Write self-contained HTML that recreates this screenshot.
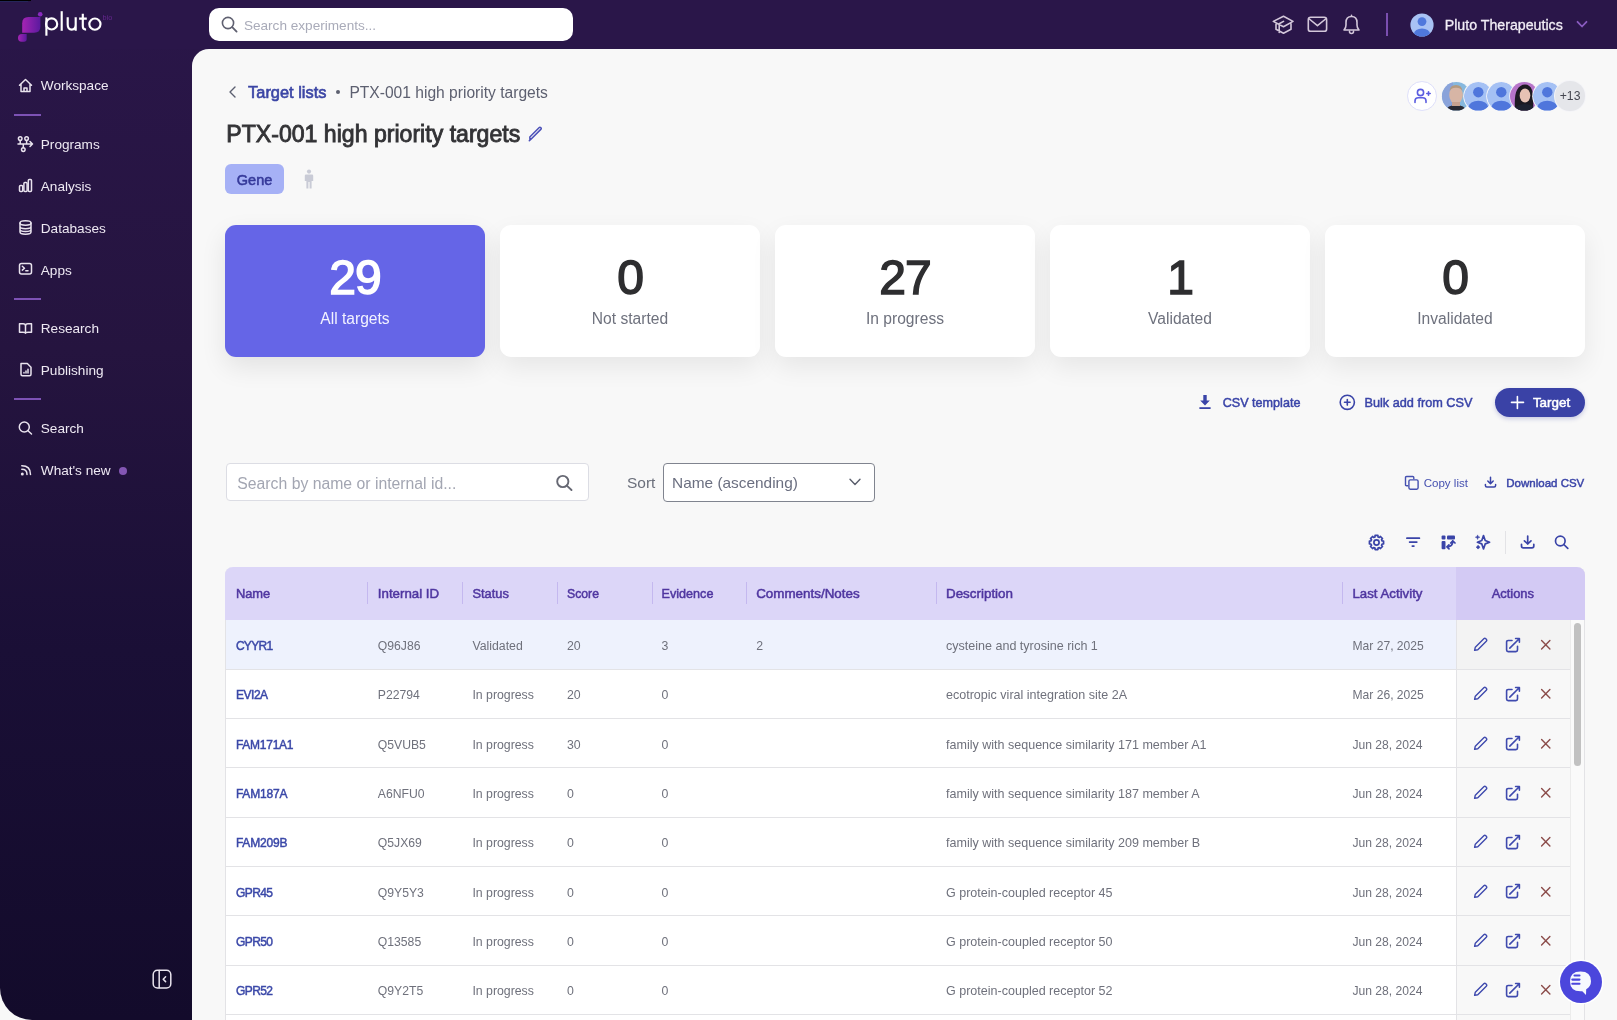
<!DOCTYPE html>
<html><head><meta charset="utf-8"><title>Pluto</title>
<style>
*{box-sizing:border-box;margin:0;padding:0}
html,body{width:1617px;height:1020px;overflow:hidden;background:#f8f8f8;font-family:"Liberation Sans",sans-serif}
.abs{position:absolute}
#app{position:absolute;left:0;top:0;width:1617px;height:1020px;overflow:hidden;will-change:transform;border-bottom-left-radius:32px;background:linear-gradient(180deg,#2a1649 0px,#25143f 350px,#1a0f36 650px,#130b2b 1020px)}
.t{position:absolute;white-space:nowrap;line-height:1}
</style></head>
<body>
<div id="app">
<div class="abs" style="left:0px;top:0px;width:1617px;height:49px;background:#2a1649"></div>
<div class="abs" style="left:0px;top:0px;width:31px;height:1px;background:#000"></div>
<div class="abs" style="left:0px;top:1px;width:28px;height:1px;background:#25265a"></div>
<div class="abs" style="left:192px;top:49px;width:1425px;height:971px;background:#f8f8f8;border-top-left-radius:17px"></div>
<svg class="abs" style="left:18px;top:9px;" width="26" height="34" viewBox="0 0 26 34"><defs><linearGradient id="lg" x1="0" x2="1" y1="0" y2="0"><stop offset="0" stop-color="#a524b4"/><stop offset="1" stop-color="#5a1a9e"/></linearGradient></defs><path d="M10.5 8 H22.4 V17.6 Q22.4 23.8 16.2 23.8 H4.2 V14.2 Q4.2 8 10.5 8Z" fill="url(#lg)"/><path d="M4 25 H8.7 V30 Q8.7 32.7 6 32.7 H3.6 Q0 32.7 0 29 Q0 25 4 25Z" fill="url(#lg)"/><circle cx="22.2" cy="5.3" r="2.3" fill="#8a2ac0"/></svg>
<svg class="abs" style="left:44px;top:10px;" width="60" height="28" viewBox="0 0 60 28"><g fill="none" stroke="#fff" stroke-width="2.15"><path d="M2.4 7.4 V25.7"/><circle cx="7.6" cy="13.9" r="5.6"/><path d="M17.7 1.2 V20.8"/><path d="M23.7 7.2 V14.6 Q23.7 19.6 27.7 19.6 Q31.7 19.6 31.7 14.6 V7.2 M31.7 12 V20.8"/><path d="M38.8 3.7 V16.3 Q38.8 19.6 42.1 19.6 M35.1 8.6 H42.8"/><circle cx="50.9" cy="14.1" r="5.6"/></g></svg>
<div class="t" style="left:102.50px;top:14px;font-size:7.3px;color:#65278f;font-weight:400;">bio</div>
<div class="abs" style="left:209px;top:8px;width:364px;height:33px;background:#fff;border-radius:10px"></div>
<svg class="abs" style="left:221px;top:16px;" width="17" height="17" viewBox="0 0 17 17"><circle cx="7" cy="7" r="5.6" fill="none" stroke="#5f6070" stroke-width="1.6"/><path d="M11.2 11.2 L15.6 15.6" stroke="#5f6070" stroke-width="1.8" stroke-linecap="round"/></svg>
<div class="t" style="left:243.90px;top:19px;font-size:13.6px;color:#a9abb9;font-weight:400;">Search experiments...</div>
<div class="t" style="left:40.80px;top:79px;font-size:13.6px;color:#eee9f3;font-weight:400;">Workspace</div>
<svg class="abs" style="left:18px;top:78px;" width="15" height="15" viewBox="0 0 15 15"><path fill="none" stroke="#e9e3ee" stroke-width="1.5" stroke-linecap="round" stroke-linejoin="round" d="M1.5 7.2 L7.5 1.5 L13.5 7.2 M3 6 V13.5 H12 V6 M6 13.5 V10 H9 V13.5"/></svg>
<div class="abs" style="left:14px;top:113.5px;width:27px;height:2px;background:#7d52b5"></div>
<div class="t" style="left:40.80px;top:138px;font-size:13.6px;color:#eee9f3;font-weight:400;">Programs</div>
<svg class="abs" style="left:17px;top:136px;" width="17" height="17" viewBox="0 0 17 17"><g fill="none" stroke="#e9e3ee" stroke-width="1.5" stroke-linecap="round" stroke-linejoin="round"><circle cx="3.2" cy="2.6" r="1.8"/><circle cx="9.6" cy="2.6" r="1.8"/><path d="M3.2 4.4 V8 M9.6 4.4 V8 M1 8 H15.5 M13 5.5 L15.5 8 L13 10.5 M6.3 8 V11.8"/><circle cx="6.3" cy="13.6" r="1.8"/></g></svg>
<div class="t" style="left:40.80px;top:180px;font-size:13.6px;color:#eee9f3;font-weight:400;">Analysis</div>
<svg class="abs" style="left:18px;top:178px;" width="15" height="15" viewBox="0 0 15 15"><g fill="none" stroke="#e9e3ee" stroke-width="1.5" stroke-linecap="round" stroke-linejoin="round"><rect x="1.5" y="7.5" width="3.2" height="6" rx="1"/><rect x="5.9" y="4.5" width="3.2" height="9" rx="1"/><rect x="10.3" y="1.5" width="3.2" height="12" rx="1"/></g></svg>
<div class="t" style="left:40.80px;top:222px;font-size:13.6px;color:#eee9f3;font-weight:400;">Databases</div>
<svg class="abs" style="left:18px;top:220px;" width="15" height="15" viewBox="0 0 15 15"><g fill="none" stroke="#e9e3ee" stroke-width="1.5" stroke-linecap="round" stroke-linejoin="round"><ellipse cx="7.5" cy="3" rx="5.5" ry="2.2"/><path d="M2 3 V12 Q2 14.2 7.5 14.2 Q13 14.2 13 12 V3 M2 6.5 Q2 8.7 7.5 8.7 Q13 8.7 13 6.5 M2 9.5 Q2 11.5 7.5 11.5 Q13 11.5 13 9.5"/></g></svg>
<div class="t" style="left:40.80px;top:264px;font-size:13.6px;color:#eee9f3;font-weight:400;">Apps</div>
<svg class="abs" style="left:18px;top:262px;" width="15" height="14" viewBox="0 0 15 14"><g fill="none" stroke="#e9e3ee" stroke-width="1.5" stroke-linecap="round" stroke-linejoin="round"><rect x="1.5" y="1.5" width="12" height="10.5" rx="2"/><path d="M4.3 4.3 L6.5 6.2 L4.3 8.1 M7.8 8.8 H10"/></g></svg>
<div class="abs" style="left:14px;top:297.5px;width:27px;height:2px;background:#7d52b5"></div>
<div class="t" style="left:40.80px;top:322px;font-size:13.6px;color:#eee9f3;font-weight:400;">Research</div>
<svg class="abs" style="left:18px;top:322px;" width="15" height="13" viewBox="0 0 15 13"><g fill="none" stroke="#e9e3ee" stroke-width="1.5" stroke-linecap="round" stroke-linejoin="round"><path d="M1.5 1.8 H5 Q7.5 1.8 7.5 4 V11.3 Q7.5 10.3 5 10.3 H1.5 Z M13.5 1.8 H10 Q7.5 1.8 7.5 4 V11.3 Q7.5 10.3 10 10.3 H13.5 Z"/></g></svg>
<div class="t" style="left:40.80px;top:364px;font-size:13.6px;color:#eee9f3;font-weight:400;">Publishing</div>
<svg class="abs" style="left:19px;top:362px;" width="14" height="15" viewBox="0 0 14 15"><g fill="none" stroke="#e9e3ee" stroke-width="1.5" stroke-linecap="round" stroke-linejoin="round"><path d="M2 1.5 H8.3 L12 5.2 V12.3 Q12 13.8 10.5 13.8 H3.5 Q2 13.8 2 12.3 Z"/><path d="M5 11 V10.5 M7 11 V9 M9 11 V7.3"/></g></svg>
<div class="abs" style="left:14px;top:397.5px;width:27px;height:2px;background:#7d52b5"></div>
<div class="t" style="left:40.80px;top:422px;font-size:13.6px;color:#eee9f3;font-weight:400;">Search</div>
<svg class="abs" style="left:18px;top:421px;" width="15" height="15" viewBox="0 0 15 15"><g fill="none" stroke="#e9e3ee" stroke-width="1.5" stroke-linecap="round" stroke-linejoin="round"><circle cx="6.3" cy="6" r="5"/><path d="M10 9.7 L13.5 13"/></g></svg>
<div class="t" style="left:40.80px;top:464px;font-size:13.6px;color:#eee9f3;font-weight:400;">What's new</div>
<svg class="abs" style="left:19px;top:463px;" width="14" height="14" viewBox="0 0 14 14"><g fill="none" stroke="#e9e3ee" stroke-width="1.5" stroke-linecap="round" stroke-linejoin="round"><path d="M2.8 2.8 Q11.5 2.8 11.5 11.5 M2.8 6.3 Q8 6.3 8 11.5"/></g><circle cx="3.3" cy="11" r="1.5" fill="#e9e3ee"/></svg>
<div class="abs" style="left:119px;top:466.9px;width:8px;height:8px;background:#8356b3;border-radius:50%"></div>
<svg class="abs" style="left:152px;top:969px;" width="21" height="21" viewBox="0 0 21 21"><g fill="none" stroke="#e9e3ee" stroke-width="1.5" stroke-linecap="round" stroke-linejoin="round"><rect x="1.2" y="1.2" width="17.6" height="17.8" rx="4.3"/><path d="M7.2 1.5 V18.6 M13.6 7.8 L11.2 10.2 L13.6 12.6"/></g></svg>
<svg class="abs" style="left:1272px;top:14px;" width="22" height="21" viewBox="0 0 22 21"><g fill="none" stroke="#d3c7da" stroke-width="1.6" stroke-linecap="round" stroke-linejoin="round"><path d="M1.3 7.4 L11.5 2.2 L21 7.4 L11.5 12.7 Z M4 9.8 V15.3 L11.5 19.2 L19 15.3 V9.8 M11.5 7.4 L7.2 9.7 V18.4"/></g></svg>
<svg class="abs" style="left:1307px;top:16px;" width="21" height="17" viewBox="0 0 21 17"><g fill="none" stroke="#d3c7da" stroke-width="1.6" stroke-linecap="round" stroke-linejoin="round"><rect x="1.3" y="1.3" width="18.3" height="14" rx="2.4"/><path d="M2.3 3 L10.45 9.6 L18.6 3"/></g></svg>
<svg class="abs" style="left:1342px;top:14px;" width="19" height="21" viewBox="0 0 19 21"><g fill="none" stroke="#d3c7da" stroke-width="1.6" stroke-linecap="round" stroke-linejoin="round"><path d="M2 16 Q4 14 4 11 V8.5 Q4 2.5 9.5 2.5 Q15 2.5 15 8.5 V11 Q15 14 17 16 Z M7.5 17.5 Q7.5 19.5 9.5 19.5 Q11.5 19.5 11.5 17.5 M9.5 1.2 V2.5"/></g></svg>
<div class="abs" style="left:1385.5px;top:13px;width:2px;height:23px;background:#7b4fb0"></div>
<svg class="abs" style="left:1410px;top:13px;" width="24" height="24" viewBox="0 0 24 24"><defs><clipPath id="av0"><circle cx="12" cy="12" r="11.6"/></clipPath></defs><circle cx="12" cy="12" r="11.6" fill="#a8c2f4"/><g clip-path="url(#av0)" fill="#4f78dc"><circle cx="12" cy="8.6" r="4.4"/><ellipse cx="12" cy="20.6" rx="8" ry="5.2"/></g></svg>
<div class="t" style="left:1444.70px;top:18px;font-size:14.2px;color:#f2edf6;font-weight:400;-webkit-text-stroke:0.3px #f2edf6;">Pluto Therapeutics</div>
<svg class="abs" style="left:1576px;top:20px;" width="12" height="9" viewBox="0 0 12 9"><path d="M1.5 1.8 L6 6.5 L10.5 1.8" fill="none" stroke="#8a5cc0" stroke-width="1.8" stroke-linecap="round" stroke-linejoin="round"/></svg>
<svg class="abs" style="left:227px;top:85px;" width="11" height="14" viewBox="0 0 11 14"><path d="M8 2 L3 7 L8 12" fill="none" stroke="#5b5f70" stroke-width="1.4" stroke-linecap="round" stroke-linejoin="round"/></svg>
<div class="t" style="left:248.10px;top:84px;font-size:16.4px;color:#3b45a5;font-weight:400;-webkit-text-stroke:0.62px #3b45a5;">Target lists</div>
<div class="abs" style="left:336.2px;top:90.3px;width:4px;height:4px;background:#5d6070;border-radius:50%"></div>
<div class="t" style="left:349.40px;top:85px;font-size:15.6px;color:#5d6070;font-weight:400;">PTX-001 high priority targets</div>
<div class="t" style="left:226.30px;top:123px;font-size:23.1px;color:#333336;font-weight:400;-webkit-text-stroke:0.88px #333336;">PTX-001 high priority targets</div>
<svg class="abs" style="left:527px;top:126px;" width="17" height="17" viewBox="0 0 17 17"><path d="M3 13.8 L2.3 14.7 L3.2 14 L13.8 3.4 Q14.8 2.4 13.8 1.6 Q12.9 0.8 12 1.7 L2.8 11 Z" fill="none" stroke="#4b50b8" stroke-width="1.5" stroke-linejoin="round"/></svg>
<div class="abs" style="left:225.3px;top:164.4px;width:59px;height:30px;background:#a6b1f6;border-radius:6px"></div>
<div class="t" style="left:236.80px;top:173px;font-size:14.5px;color:#363a9a;font-weight:400;-webkit-text-stroke:0.55px #363a9a;">Gene</div>
<svg class="abs" style="left:303px;top:169px;" width="12" height="21" viewBox="0 0 12 21"><g fill="#c9cbd6"><circle cx="6" cy="2.6" r="2.1"/><path d="M3 5.6 H9 Q10.2 5.6 10.2 6.8 V12 H8.6 V19.5 H6.6 V13 H5.4 V19.5 H3.4 V12 H1.8 V6.8 Q1.8 5.6 3 5.6Z"/></g></svg>
<div class="abs" style="left:1407.3px;top:81.1px;width:29.8px;height:29.8px;background:#fff;border:1px solid #dedffa;border-radius:50%"></div>
<svg class="abs" style="left:1413px;top:87px;" width="18" height="18" viewBox="0 0 18 18"><g fill="none" stroke="#5b5de0" stroke-width="1.6" stroke-linecap="round"><circle cx="7.5" cy="5.5" r="3.1"/><path d="M2 15.5 V14 Q2 10.8 5.3 10.8 H9.7 Q13 10.8 13 14 V15.5 M13.8 6.5 H17.2 M15.5 4.8 V8.2"/></g></svg>
<svg class="abs" style="left:1440.7px;top:80.7px" width="30.6" height="30.6" viewBox="0 0 30.6 30.6"><defs><clipPath id="c1456"><circle cx="15.3" cy="15.3" r="14.3"/></clipPath></defs><circle cx="15.3" cy="15.3" r="15.100000000000001" fill="#f4f4f8"/><g clip-path="url(#c1456)"><rect width="30.6" height="30.6" fill="#86b8de"/><rect x="0" y="0" width="12" height="30.6" fill="#8aa3da"/><ellipse cx="15" cy="14" rx="6.8" ry="9" fill="#d7b5a5"/><path d="M8.5 10 Q9 4 15 4 Q21 4 21.5 10 Q19 6.5 15 6.8 Q11 6.5 8.5 10Z" fill="#b39a80"/><path d="M4 30.6 Q6 24 15 24 Q24 24 26 30.6Z" fill="#2a2a33"/><rect x="11" y="21" width="8" height="4" fill="#c8a290"/></g></svg>
<svg class="abs" style="left:1463.3px;top:80.7px" width="30.6" height="30.6" viewBox="0 0 30.6 30.6"><defs><clipPath id="c1478"><circle cx="15.3" cy="15.3" r="14.3"/></clipPath></defs><circle cx="15.3" cy="15.3" r="15.100000000000001" fill="#f4f4f8"/><g clip-path="url(#c1478)"><circle cx="15.3" cy="15.3" r="14.3" fill="#a5c1f4"/><circle cx="15.3" cy="11.2" r="5.2" fill="#4f76dc"/><ellipse cx="15.3" cy="25.6" rx="9.6" ry="5.8" fill="#4f76dc"/></g></svg>
<svg class="abs" style="left:1485.9px;top:80.7px" width="30.6" height="30.6" viewBox="0 0 30.6 30.6"><defs><clipPath id="c1501"><circle cx="15.3" cy="15.3" r="14.3"/></clipPath></defs><circle cx="15.3" cy="15.3" r="15.100000000000001" fill="#f4f4f8"/><g clip-path="url(#c1501)"><circle cx="15.3" cy="15.3" r="14.3" fill="#a5c1f4"/><circle cx="15.3" cy="11.2" r="5.2" fill="#4f76dc"/><ellipse cx="15.3" cy="25.6" rx="9.6" ry="5.8" fill="#4f76dc"/></g></svg>
<svg class="abs" style="left:1508.7px;top:80.7px" width="30.6" height="30.6" viewBox="0 0 30.6 30.6"><defs><clipPath id="c1524"><circle cx="15.3" cy="15.3" r="14.3"/></clipPath></defs><circle cx="15.3" cy="15.3" r="15.100000000000001" fill="#f4f4f8"/><g clip-path="url(#c1524)"><rect width="30.6" height="30.6" fill="#b774c9"/><path d="M6 30 Q5 14 8 9 Q11 3.5 16 3.5 Q21 3.5 23 9 Q25 15 24 30Z" fill="#1d1a22"/><ellipse cx="16" cy="14.5" rx="5.3" ry="7" fill="#e7c2b4"/><path d="M4 30.6 Q7 23 16 23 Q25 23 27 30.6Z" fill="#1e2230"/></g></svg>
<svg class="abs" style="left:1531.5px;top:80.7px" width="30.6" height="30.6" viewBox="0 0 30.6 30.6"><defs><clipPath id="c1546"><circle cx="15.3" cy="15.3" r="14.3"/></clipPath></defs><circle cx="15.3" cy="15.3" r="15.100000000000001" fill="#f4f4f8"/><g clip-path="url(#c1546)"><circle cx="15.3" cy="15.3" r="14.3" fill="#a5c1f4"/><circle cx="15.3" cy="11.2" r="5.2" fill="#4f76dc"/><ellipse cx="15.3" cy="25.6" rx="9.6" ry="5.8" fill="#4f76dc"/></g></svg>
<div class="abs" style="left:1555.3px;top:81.2px;width:29.6px;height:29.6px;background:#e5e6ea;border-radius:50%;box-shadow:0 0 0 1px #f4f4f8"></div>
<div class="t" style="left:1370.10px;width:400px;text-align:center;top:90px;font-size:12.2px;color:#444650;font-weight:400;">+13</div>
<div class="abs" style="left:225px;top:225px;width:260px;height:132px;background:#6565e7;border-radius:11px;box-shadow:0 10px 26px rgba(0,0,0,0.09)"></div>
<div class="t" style="left:155.00px;width:400px;text-align:center;top:254px;font-size:48px;color:#ffffff;font-weight:400;-webkit-text-stroke:1.50px #ffffff;letter-spacing:-1.0px">29</div>
<div class="t" style="left:155.00px;width:400px;text-align:center;top:311px;font-size:15.6px;color:#f2f2ff;font-weight:400;">All targets</div>
<div class="abs" style="left:500px;top:225px;width:260px;height:132px;background:#fff;border-radius:11px;box-shadow:0 10px 26px rgba(0,0,0,0.075)"></div>
<div class="t" style="left:430.00px;width:400px;text-align:center;top:254px;font-size:48px;color:#2e2e30;font-weight:400;-webkit-text-stroke:1.50px #2e2e30;letter-spacing:-1.0px">0</div>
<div class="t" style="left:430.00px;width:400px;text-align:center;top:311px;font-size:15.6px;color:#6e717d;font-weight:400;">Not started</div>
<div class="abs" style="left:775px;top:225px;width:260px;height:132px;background:#fff;border-radius:11px;box-shadow:0 10px 26px rgba(0,0,0,0.075)"></div>
<div class="t" style="left:705.00px;width:400px;text-align:center;top:254px;font-size:48px;color:#2e2e30;font-weight:400;-webkit-text-stroke:1.50px #2e2e30;letter-spacing:-1.0px">27</div>
<div class="t" style="left:705.00px;width:400px;text-align:center;top:311px;font-size:15.6px;color:#6e717d;font-weight:400;">In progress</div>
<div class="abs" style="left:1050px;top:225px;width:260px;height:132px;background:#fff;border-radius:11px;box-shadow:0 10px 26px rgba(0,0,0,0.075)"></div>
<div class="t" style="left:980.00px;width:400px;text-align:center;top:254px;font-size:48px;color:#2e2e30;font-weight:400;-webkit-text-stroke:1.50px #2e2e30;letter-spacing:-1.0px">1</div>
<div class="t" style="left:980.00px;width:400px;text-align:center;top:311px;font-size:15.6px;color:#6e717d;font-weight:400;">Validated</div>
<div class="abs" style="left:1325px;top:225px;width:260px;height:132px;background:#fff;border-radius:11px;box-shadow:0 10px 26px rgba(0,0,0,0.075)"></div>
<div class="t" style="left:1255.00px;width:400px;text-align:center;top:254px;font-size:48px;color:#2e2e30;font-weight:400;-webkit-text-stroke:1.50px #2e2e30;letter-spacing:-1.0px">0</div>
<div class="t" style="left:1255.00px;width:400px;text-align:center;top:311px;font-size:15.6px;color:#6e717d;font-weight:400;">Invalidated</div>
<svg class="abs" style="left:1198px;top:394px;" width="14" height="16" viewBox="0 0 14 16"><path d="M5.3 1 H8.7 V6.5 H11.8 L7 11.6 L2.2 6.5 H5.3 Z" fill="#3a44a8"/><rect x="1.4" y="13.2" width="11.2" height="1.8" fill="#3a44a8"/></svg>
<div class="t" style="left:1222.70px;top:397px;font-size:12.6px;color:#3a44a8;font-weight:400;-webkit-text-stroke:0.48px #3a44a8;">CSV template</div>
<svg class="abs" style="left:1338px;top:393px;" width="18" height="18" viewBox="0 0 18 18"><g fill="none" stroke="#3a44a8" stroke-width="1.6" stroke-linecap="round"><circle cx="9.3" cy="9.3" r="7.1"/><path d="M9.3 6.5 V12.1 M6.5 9.3 H12.1"/></g></svg>
<div class="t" style="left:1364.50px;top:397px;font-size:12.7px;color:#3a44a8;font-weight:400;-webkit-text-stroke:0.48px #3a44a8;">Bulk add from CSV</div>
<div class="abs" style="left:1495.3px;top:388.2px;width:89.6px;height:28.6px;background:#3a42a6;border-radius:15px;box-shadow:0 2px 4px rgba(58,66,166,0.25)"></div>
<svg class="abs" style="left:1510px;top:395px;" width="15" height="15" viewBox="0 0 15 15"><path d="M7.4 1.5 V13.5 M1.5 7.4 H13.5" stroke="#fff" stroke-width="1.6" stroke-linecap="round"/></svg>
<div class="t" style="left:1532.90px;top:396px;font-size:13.4px;color:#fff;font-weight:400;-webkit-text-stroke:0.51px #fff;">Target</div>
<div class="abs" style="left:225.6px;top:463.2px;width:363px;height:38.3px;background:#fff;border:1px solid #dcdde4;border-radius:4px"></div>
<div class="t" style="left:237.30px;top:476px;font-size:15.78px;color:#a3a6b2;font-weight:400;">Search by name or internal id...</div>
<svg class="abs" style="left:555px;top:474px;" width="19" height="18" viewBox="0 0 19 18"><g fill="none" stroke="#666873" stroke-width="1.9" stroke-linecap="round"><circle cx="7.8" cy="7.5" r="5.6"/><path d="M11.8 11.6 L16.5 16"/></g></svg>
<div class="t" style="left:627.00px;top:475px;font-size:15.48px;color:#6b6f7b;font-weight:400;">Sort</div>
<div class="abs" style="left:663.3px;top:462.8px;width:211.7px;height:39px;background:#fff;border:1px solid #80848f;border-radius:4px"></div>
<div class="t" style="left:672.00px;top:475px;font-size:15.41px;color:#6b6f80;font-weight:400;">Name (ascending)</div>
<svg class="abs" style="left:848px;top:477px;" width="14" height="10" viewBox="0 0 14 10"><path d="M2 2.3 L7 7.6 L12 2.3" fill="none" stroke="#5a5e6c" stroke-width="1.4" stroke-linecap="round" stroke-linejoin="round"/></svg>
<svg class="abs" style="left:1404px;top:474.5px;" width="16" height="16" viewBox="0 0 16 16"><g fill="none" stroke="#4550b0" stroke-width="1.4" stroke-linejoin="round"><path d="M4.2 10.8 H2.6 Q1.5 10.8 1.5 9.7 V2.6 Q1.5 1.5 2.6 1.5 H8.7 Q9.8 1.5 9.8 2.6 V4.2"/><rect x="4.9" y="4.9" width="9.2" height="9.3" rx="1.4"/></g></svg>
<div class="t" style="left:1423.70px;top:478px;font-size:11.55px;color:#4550b0;font-weight:400;">Copy list</div>
<svg class="abs" style="left:1484.2px;top:476px;" width="13" height="13" viewBox="0 0 13 13"><g fill="none" stroke="#3a44a8" stroke-width="1.5" stroke-linecap="round" stroke-linejoin="round"><path d="M6.5 1.2 V7.6 M3.8 5 L6.5 7.7 L9.2 5 M1.4 8.4 V9.6 Q1.4 11.1 2.9 11.1 H10.1 Q11.6 11.1 11.6 9.6 V8.4"/></g></svg>
<div class="t" style="left:1506.30px;top:478px;font-size:11.5px;color:#3a44a8;font-weight:400;-webkit-text-stroke:0.44px #3a44a8;">Download CSV</div>
<svg class="abs" style="left:1368.1px;top:533.6px;" width="17" height="17" viewBox="0 0 17 17"><polygon points="7.07,1.44 9.93,1.44 10.01,2.90 11.40,3.47 12.48,2.50 14.50,4.52 13.53,5.60 14.10,6.99 15.56,7.07 15.56,9.93 14.10,10.01 13.53,11.40 14.50,12.48 12.48,14.50 11.40,13.53 10.01,14.10 9.93,15.56 7.07,15.56 6.99,14.10 5.60,13.53 4.52,14.50 2.50,12.48 3.47,11.40 2.90,10.01 1.44,9.93 1.44,7.07 2.90,6.99 3.47,5.60 2.50,4.52 4.52,2.50 5.60,3.47 6.99,2.90" fill="none" stroke="#3a44a8" stroke-width="1.7" stroke-linecap="round" stroke-linejoin="round" stroke-width="1.5"/><circle cx="8.5" cy="8.5" r="2.6" fill="none" stroke="#3a44a8" stroke-width="1.7" stroke-linecap="round" stroke-linejoin="round" stroke-width="1.5"/></svg>
<svg class="abs" style="left:1404.5px;top:536px;" width="16" height="12" viewBox="0 0 16 12"><g fill="none" stroke="#3a44a8" stroke-width="1.7" stroke-linecap="round" stroke-linejoin="round" stroke-width="1.7"><path d="M1.9 2.2 H14.4 M4.6 6.1 H11.8 M7.3 10.1 H8.9"/></g></svg>
<svg class="abs" style="left:1440.5px;top:534.5px;" width="16" height="15" viewBox="0 0 16 15"><g fill="#3a44a8"><rect x="0.6" y="0.6" width="3.9" height="3.9" rx="1"/><rect x="6" y="0.6" width="8" height="3.9" rx="1"/><rect x="0.6" y="6" width="3.9" height="8.2" rx="1"/></g><g fill="none" stroke="#3a44a8" stroke-width="1.7" stroke-linecap="round" stroke-linejoin="round" stroke-width="1.5"><path d="M5.9 11.8 Q11.8 11.8 11.8 5.9 M7.9 9.9 L5.9 11.8 L8 13.8 M9.7 8 L11.8 5.9 L14 8"/></g></svg>
<svg class="abs" style="left:1474.8px;top:533.7px;" width="17" height="17" viewBox="0 0 17 17"><path d="M8.5 1.5 L10.2 6.5 L14.6 8.2 L10.2 9.9 L8.5 14.9 L6.8 9.9 L2.4 8.2 L6.8 6.5 Z" fill="none" stroke="#3a44a8" stroke-width="1.7" stroke-linecap="round" stroke-linejoin="round" stroke-width="1.5"/><path d="M2.6 0.9 L3.2 2.6 L4.9 3.2 L3.2 3.8 L2.6 5.5 L2 3.8 L0.3 3.2 L2 2.6Z" fill="#3a44a8" stroke="#3a44a8" stroke-width="0.5" stroke-linejoin="round"/><path d="M3.1 11.3 L5 13.2 L3.1 15.1 L1.2 13.2Z" fill="#3a44a8" stroke="#3a44a8" stroke-width="0.6" stroke-linejoin="round"/></svg>
<div class="abs" style="left:1504.7px;top:531px;width:1.2px;height:22.6px;background:#e3e3e6"></div>
<svg class="abs" style="left:1519.5px;top:535px;" width="16" height="15" viewBox="0 0 16 15"><g fill="none" stroke="#3a44a8" stroke-width="1.7" stroke-linecap="round" stroke-linejoin="round"><path d="M7.7 1 V9 M4.4 5.8 L7.7 9 L11 5.8 M1.5 9.3 V11 Q1.5 12.8 3.3 12.8 H12 Q13.8 12.8 13.8 11 V9.3"/></g></svg>
<svg class="abs" style="left:1554px;top:535px;" width="16" height="15" viewBox="0 0 16 15"><g fill="none" stroke="#3a44a8" stroke-width="1.7" stroke-linecap="round" stroke-linejoin="round" stroke-width="1.8"><circle cx="6.3" cy="6" r="4.8"/><path d="M9.8 9.5 L13.8 13.3"/></g></svg>
<div class="abs" style="left:225px;top:567px;width:1360px;height:453px;background:#fff;border-left:1px solid #e3e3e6;border-right:1px solid #e3e3e6;border-top-left-radius:8px;border-top-right-radius:8px;overflow:hidden"></div>
<div class="abs" style="left:225px;top:567px;width:1231.4px;height:53px;background:#dcd6f8;border-top-left-radius:8px"></div>
<div class="abs" style="left:1456.4px;top:567px;width:128.5999999999999px;height:53px;background:#d3caf4;border-top-right-radius:8px"></div>
<div class="abs" style="left:367.3px;top:581.7px;width:1.2px;height:22.5px;background:#c4b8ef"></div>
<div class="abs" style="left:462.0px;top:581.7px;width:1.2px;height:22.5px;background:#c4b8ef"></div>
<div class="abs" style="left:556.9px;top:581.7px;width:1.2px;height:22.5px;background:#c4b8ef"></div>
<div class="abs" style="left:651.8px;top:581.7px;width:1.2px;height:22.5px;background:#c4b8ef"></div>
<div class="abs" style="left:746.1px;top:581.7px;width:1.2px;height:22.5px;background:#c4b8ef"></div>
<div class="abs" style="left:935.7px;top:581.7px;width:1.2px;height:22.5px;background:#c4b8ef"></div>
<div class="abs" style="left:1342.0px;top:581.7px;width:1.2px;height:22.5px;background:#c4b8ef"></div>
<div class="t" style="left:235.90px;top:588px;font-size:12.9px;color:#4f36a0;font-weight:400;-webkit-text-stroke:0.49px #4f36a0;">Name</div>
<div class="t" style="left:377.80px;top:587px;font-size:13.3px;color:#4f36a0;font-weight:400;-webkit-text-stroke:0.51px #4f36a0;">Internal ID</div>
<div class="t" style="left:472.40px;top:588px;font-size:12.85px;color:#4f36a0;font-weight:400;-webkit-text-stroke:0.49px #4f36a0;">Status</div>
<div class="t" style="left:567.00px;top:588px;font-size:12.25px;color:#4f36a0;font-weight:400;-webkit-text-stroke:0.47px #4f36a0;">Score</div>
<div class="t" style="left:661.60px;top:588px;font-size:12.6px;color:#4f36a0;font-weight:400;-webkit-text-stroke:0.48px #4f36a0;">Evidence</div>
<div class="t" style="left:756.20px;top:587px;font-size:13.4px;color:#4f36a0;font-weight:400;-webkit-text-stroke:0.51px #4f36a0;">Comments/Notes</div>
<div class="t" style="left:946.00px;top:587px;font-size:13.4px;color:#4f36a0;font-weight:400;-webkit-text-stroke:0.51px #4f36a0;">Description</div>
<div class="t" style="left:1352.50px;top:587px;font-size:13.25px;color:#4f36a0;font-weight:400;-webkit-text-stroke:0.50px #4f36a0;">Last Activity</div>
<div class="t" style="left:1312.80px;width:400px;text-align:center;top:588px;font-size:12.9px;color:#4f36a0;font-weight:400;-webkit-text-stroke:0.49px #4f36a0;">Actions</div>
<div class="abs" style="left:1456px;top:620px;width:114px;height:400px;background:#f8f8f8;border-left:1px solid #e3e3e6"></div>
<div class="abs" style="left:1457px;top:620px;width:113px;height:49.3px;background:#f3f3f3"></div>
<div class="abs" style="left:1570px;top:620px;width:14px;height:400px;background:#fafafa;border-left:1px solid #ececec"></div>
<div class="abs" style="left:226px;top:620.0px;width:1230px;height:49.3px;background:#eef2fd"></div>
<div class="abs" style="left:226px;top:668.6999999999999px;width:1344px;height:1px;background:#e3e3e6"></div>
<div class="t" style="left:235.90px;top:640px;font-size:12.0px;color:#3b48a8;font-weight:400;-webkit-text-stroke:0.46px #3b48a8;letter-spacing:-0.7px">CYYR1</div>
<div class="t" style="left:377.80px;top:640px;font-size:12.2px;color:#6f717c;font-weight:400;">Q96J86</div>
<div class="t" style="left:472.40px;top:640px;font-size:12.3px;color:#6f717c;font-weight:400;">Validated</div>
<div class="t" style="left:567.00px;top:640px;font-size:12.3px;color:#6f717c;font-weight:400;">20</div>
<div class="t" style="left:661.60px;top:640px;font-size:12.3px;color:#6f717c;font-weight:400;">3</div>
<div class="t" style="left:756.20px;top:640px;font-size:12.3px;color:#6f717c;font-weight:400;">2</div>
<div class="t" style="left:946.00px;top:640px;font-size:12.54px;color:#6f717c;font-weight:400;">cysteine and tyrosine rich 1</div>
<div class="t" style="left:1352.50px;top:640px;font-size:12.1px;color:#6f717c;font-weight:400;">Mar 27, 2025</div>
<svg class="abs" style="left:1473px;top:637.15px;" width="15" height="15" viewBox="0 0 15 15"><path d="M1.6 13.4 L2.3 10.2 L10.8 1.7 Q11.8 0.7 12.8 1.7 L13.3 2.2 Q14.3 3.2 13.3 4.2 L4.8 12.7 Z" fill="none" stroke="#3f4aae" stroke-width="1.4" stroke-linejoin="round"/></svg>
<svg class="abs" style="left:1504.5px;top:636.85px;" width="16" height="16" viewBox="0 0 16 16"><g fill="none" stroke="#3f4aae" stroke-width="1.6" stroke-linecap="round" stroke-linejoin="round"><path d="M7 3.45 H3.2 Q1.6 3.45 1.6 5.05 V13.05 Q1.6 14.65 3.2 14.65 H10.9 Q12.5 14.65 12.5 13.05 V9.3 M4.8 11.1 L14.2 1.7 M10.6 1.5 H14.4 V5.2"/></g></svg>
<svg class="abs" style="left:1540.2px;top:639.05px;" width="12" height="12" viewBox="0 0 12 12"><path d="M1.6 1.6 L9.9 9.9 M9.9 1.6 L1.6 9.9" stroke="#8b4c4a" stroke-width="1.4" stroke-linecap="round"/></svg>
<div class="abs" style="left:226px;top:717.9999999999999px;width:1344px;height:1px;background:#e3e3e6"></div>
<div class="t" style="left:235.90px;top:689px;font-size:12.0px;color:#3b48a8;font-weight:400;-webkit-text-stroke:0.46px #3b48a8;letter-spacing:-0.45px">EVI2A</div>
<div class="t" style="left:377.80px;top:689px;font-size:12.2px;color:#6f717c;font-weight:400;">P22794</div>
<div class="t" style="left:472.40px;top:689px;font-size:12.3px;color:#6f717c;font-weight:400;">In progress</div>
<div class="t" style="left:567.00px;top:689px;font-size:12.3px;color:#6f717c;font-weight:400;">20</div>
<div class="t" style="left:661.60px;top:689px;font-size:12.3px;color:#6f717c;font-weight:400;">0</div>
<div class="t" style="left:756.20px;top:689px;font-size:12.3px;color:#6f717c;font-weight:400;"></div>
<div class="t" style="left:946.00px;top:689px;font-size:12.54px;color:#6f717c;font-weight:400;">ecotropic viral integration site 2A</div>
<div class="t" style="left:1352.50px;top:689px;font-size:12.1px;color:#6f717c;font-weight:400;">Mar 26, 2025</div>
<svg class="abs" style="left:1473px;top:686.4499999999999px;" width="15" height="15" viewBox="0 0 15 15"><path d="M1.6 13.4 L2.3 10.2 L10.8 1.7 Q11.8 0.7 12.8 1.7 L13.3 2.2 Q14.3 3.2 13.3 4.2 L4.8 12.7 Z" fill="none" stroke="#3f4aae" stroke-width="1.4" stroke-linejoin="round"/></svg>
<svg class="abs" style="left:1504.5px;top:686.15px;" width="16" height="16" viewBox="0 0 16 16"><g fill="none" stroke="#3f4aae" stroke-width="1.6" stroke-linecap="round" stroke-linejoin="round"><path d="M7 3.45 H3.2 Q1.6 3.45 1.6 5.05 V13.05 Q1.6 14.65 3.2 14.65 H10.9 Q12.5 14.65 12.5 13.05 V9.3 M4.8 11.1 L14.2 1.7 M10.6 1.5 H14.4 V5.2"/></g></svg>
<svg class="abs" style="left:1540.2px;top:688.3499999999999px;" width="12" height="12" viewBox="0 0 12 12"><path d="M1.6 1.6 L9.9 9.9 M9.9 1.6 L1.6 9.9" stroke="#8b4c4a" stroke-width="1.4" stroke-linecap="round"/></svg>
<div class="abs" style="left:226px;top:767.3px;width:1344px;height:1px;background:#e3e3e6"></div>
<div class="t" style="left:235.90px;top:739px;font-size:12.0px;color:#3b48a8;font-weight:400;-webkit-text-stroke:0.46px #3b48a8;letter-spacing:-0.25px">FAM171A1</div>
<div class="t" style="left:377.80px;top:739px;font-size:12.2px;color:#6f717c;font-weight:400;">Q5VUB5</div>
<div class="t" style="left:472.40px;top:739px;font-size:12.3px;color:#6f717c;font-weight:400;">In progress</div>
<div class="t" style="left:567.00px;top:739px;font-size:12.3px;color:#6f717c;font-weight:400;">30</div>
<div class="t" style="left:661.60px;top:739px;font-size:12.3px;color:#6f717c;font-weight:400;">0</div>
<div class="t" style="left:756.20px;top:739px;font-size:12.3px;color:#6f717c;font-weight:400;"></div>
<div class="t" style="left:946.00px;top:739px;font-size:12.54px;color:#6f717c;font-weight:400;">family with sequence similarity 171 member A1</div>
<div class="t" style="left:1352.50px;top:739px;font-size:12.1px;color:#6f717c;font-weight:400;">Jun 28, 2024</div>
<svg class="abs" style="left:1473px;top:735.75px;" width="15" height="15" viewBox="0 0 15 15"><path d="M1.6 13.4 L2.3 10.2 L10.8 1.7 Q11.8 0.7 12.8 1.7 L13.3 2.2 Q14.3 3.2 13.3 4.2 L4.8 12.7 Z" fill="none" stroke="#3f4aae" stroke-width="1.4" stroke-linejoin="round"/></svg>
<svg class="abs" style="left:1504.5px;top:735.45px;" width="16" height="16" viewBox="0 0 16 16"><g fill="none" stroke="#3f4aae" stroke-width="1.6" stroke-linecap="round" stroke-linejoin="round"><path d="M7 3.45 H3.2 Q1.6 3.45 1.6 5.05 V13.05 Q1.6 14.65 3.2 14.65 H10.9 Q12.5 14.65 12.5 13.05 V9.3 M4.8 11.1 L14.2 1.7 M10.6 1.5 H14.4 V5.2"/></g></svg>
<svg class="abs" style="left:1540.2px;top:737.65px;" width="12" height="12" viewBox="0 0 12 12"><path d="M1.6 1.6 L9.9 9.9 M9.9 1.6 L1.6 9.9" stroke="#8b4c4a" stroke-width="1.4" stroke-linecap="round"/></svg>
<div class="abs" style="left:226px;top:816.5999999999999px;width:1344px;height:1px;background:#e3e3e6"></div>
<div class="t" style="left:235.90px;top:788px;font-size:12.0px;color:#3b48a8;font-weight:400;-webkit-text-stroke:0.46px #3b48a8;letter-spacing:-0.2px">FAM187A</div>
<div class="t" style="left:377.80px;top:788px;font-size:12.2px;color:#6f717c;font-weight:400;">A6NFU0</div>
<div class="t" style="left:472.40px;top:788px;font-size:12.3px;color:#6f717c;font-weight:400;">In progress</div>
<div class="t" style="left:567.00px;top:788px;font-size:12.3px;color:#6f717c;font-weight:400;">0</div>
<div class="t" style="left:661.60px;top:788px;font-size:12.3px;color:#6f717c;font-weight:400;">0</div>
<div class="t" style="left:756.20px;top:788px;font-size:12.3px;color:#6f717c;font-weight:400;"></div>
<div class="t" style="left:946.00px;top:788px;font-size:12.54px;color:#6f717c;font-weight:400;">family with sequence similarity 187 member A</div>
<div class="t" style="left:1352.50px;top:788px;font-size:12.1px;color:#6f717c;font-weight:400;">Jun 28, 2024</div>
<svg class="abs" style="left:1473px;top:785.05px;" width="15" height="15" viewBox="0 0 15 15"><path d="M1.6 13.4 L2.3 10.2 L10.8 1.7 Q11.8 0.7 12.8 1.7 L13.3 2.2 Q14.3 3.2 13.3 4.2 L4.8 12.7 Z" fill="none" stroke="#3f4aae" stroke-width="1.4" stroke-linejoin="round"/></svg>
<svg class="abs" style="left:1504.5px;top:784.75px;" width="16" height="16" viewBox="0 0 16 16"><g fill="none" stroke="#3f4aae" stroke-width="1.6" stroke-linecap="round" stroke-linejoin="round"><path d="M7 3.45 H3.2 Q1.6 3.45 1.6 5.05 V13.05 Q1.6 14.65 3.2 14.65 H10.9 Q12.5 14.65 12.5 13.05 V9.3 M4.8 11.1 L14.2 1.7 M10.6 1.5 H14.4 V5.2"/></g></svg>
<svg class="abs" style="left:1540.2px;top:786.9499999999999px;" width="12" height="12" viewBox="0 0 12 12"><path d="M1.6 1.6 L9.9 9.9 M9.9 1.6 L1.6 9.9" stroke="#8b4c4a" stroke-width="1.4" stroke-linecap="round"/></svg>
<div class="abs" style="left:226px;top:865.9px;width:1344px;height:1px;background:#e3e3e6"></div>
<div class="t" style="left:235.90px;top:837px;font-size:12.0px;color:#3b48a8;font-weight:400;-webkit-text-stroke:0.46px #3b48a8;letter-spacing:-0.2px">FAM209B</div>
<div class="t" style="left:377.80px;top:837px;font-size:12.2px;color:#6f717c;font-weight:400;">Q5JX69</div>
<div class="t" style="left:472.40px;top:837px;font-size:12.3px;color:#6f717c;font-weight:400;">In progress</div>
<div class="t" style="left:567.00px;top:837px;font-size:12.3px;color:#6f717c;font-weight:400;">0</div>
<div class="t" style="left:661.60px;top:837px;font-size:12.3px;color:#6f717c;font-weight:400;">0</div>
<div class="t" style="left:756.20px;top:837px;font-size:12.3px;color:#6f717c;font-weight:400;"></div>
<div class="t" style="left:946.00px;top:837px;font-size:12.54px;color:#6f717c;font-weight:400;">family with sequence similarity 209 member B</div>
<div class="t" style="left:1352.50px;top:837px;font-size:12.1px;color:#6f717c;font-weight:400;">Jun 28, 2024</div>
<svg class="abs" style="left:1473px;top:834.35px;" width="15" height="15" viewBox="0 0 15 15"><path d="M1.6 13.4 L2.3 10.2 L10.8 1.7 Q11.8 0.7 12.8 1.7 L13.3 2.2 Q14.3 3.2 13.3 4.2 L4.8 12.7 Z" fill="none" stroke="#3f4aae" stroke-width="1.4" stroke-linejoin="round"/></svg>
<svg class="abs" style="left:1504.5px;top:834.0500000000001px;" width="16" height="16" viewBox="0 0 16 16"><g fill="none" stroke="#3f4aae" stroke-width="1.6" stroke-linecap="round" stroke-linejoin="round"><path d="M7 3.45 H3.2 Q1.6 3.45 1.6 5.05 V13.05 Q1.6 14.65 3.2 14.65 H10.9 Q12.5 14.65 12.5 13.05 V9.3 M4.8 11.1 L14.2 1.7 M10.6 1.5 H14.4 V5.2"/></g></svg>
<svg class="abs" style="left:1540.2px;top:836.25px;" width="12" height="12" viewBox="0 0 12 12"><path d="M1.6 1.6 L9.9 9.9 M9.9 1.6 L1.6 9.9" stroke="#8b4c4a" stroke-width="1.4" stroke-linecap="round"/></svg>
<div class="abs" style="left:226px;top:915.1999999999999px;width:1344px;height:1px;background:#e3e3e6"></div>
<div class="t" style="left:235.90px;top:887px;font-size:12.0px;color:#3b48a8;font-weight:400;-webkit-text-stroke:0.46px #3b48a8;letter-spacing:-0.55px">GPR45</div>
<div class="t" style="left:377.80px;top:887px;font-size:12.2px;color:#6f717c;font-weight:400;">Q9Y5Y3</div>
<div class="t" style="left:472.40px;top:887px;font-size:12.3px;color:#6f717c;font-weight:400;">In progress</div>
<div class="t" style="left:567.00px;top:887px;font-size:12.3px;color:#6f717c;font-weight:400;">0</div>
<div class="t" style="left:661.60px;top:887px;font-size:12.3px;color:#6f717c;font-weight:400;">0</div>
<div class="t" style="left:756.20px;top:887px;font-size:12.3px;color:#6f717c;font-weight:400;"></div>
<div class="t" style="left:946.00px;top:887px;font-size:12.54px;color:#6f717c;font-weight:400;">G protein-coupled receptor 45</div>
<div class="t" style="left:1352.50px;top:887px;font-size:12.1px;color:#6f717c;font-weight:400;">Jun 28, 2024</div>
<svg class="abs" style="left:1473px;top:883.65px;" width="15" height="15" viewBox="0 0 15 15"><path d="M1.6 13.4 L2.3 10.2 L10.8 1.7 Q11.8 0.7 12.8 1.7 L13.3 2.2 Q14.3 3.2 13.3 4.2 L4.8 12.7 Z" fill="none" stroke="#3f4aae" stroke-width="1.4" stroke-linejoin="round"/></svg>
<svg class="abs" style="left:1504.5px;top:883.35px;" width="16" height="16" viewBox="0 0 16 16"><g fill="none" stroke="#3f4aae" stroke-width="1.6" stroke-linecap="round" stroke-linejoin="round"><path d="M7 3.45 H3.2 Q1.6 3.45 1.6 5.05 V13.05 Q1.6 14.65 3.2 14.65 H10.9 Q12.5 14.65 12.5 13.05 V9.3 M4.8 11.1 L14.2 1.7 M10.6 1.5 H14.4 V5.2"/></g></svg>
<svg class="abs" style="left:1540.2px;top:885.55px;" width="12" height="12" viewBox="0 0 12 12"><path d="M1.6 1.6 L9.9 9.9 M9.9 1.6 L1.6 9.9" stroke="#8b4c4a" stroke-width="1.4" stroke-linecap="round"/></svg>
<div class="abs" style="left:226px;top:964.4999999999999px;width:1344px;height:1px;background:#e3e3e6"></div>
<div class="t" style="left:235.90px;top:936px;font-size:12.0px;color:#3b48a8;font-weight:400;-webkit-text-stroke:0.46px #3b48a8;letter-spacing:-0.55px">GPR50</div>
<div class="t" style="left:377.80px;top:936px;font-size:12.2px;color:#6f717c;font-weight:400;">Q13585</div>
<div class="t" style="left:472.40px;top:936px;font-size:12.3px;color:#6f717c;font-weight:400;">In progress</div>
<div class="t" style="left:567.00px;top:936px;font-size:12.3px;color:#6f717c;font-weight:400;">0</div>
<div class="t" style="left:661.60px;top:936px;font-size:12.3px;color:#6f717c;font-weight:400;">0</div>
<div class="t" style="left:756.20px;top:936px;font-size:12.3px;color:#6f717c;font-weight:400;"></div>
<div class="t" style="left:946.00px;top:936px;font-size:12.54px;color:#6f717c;font-weight:400;">G protein-coupled receptor 50</div>
<div class="t" style="left:1352.50px;top:936px;font-size:12.1px;color:#6f717c;font-weight:400;">Jun 28, 2024</div>
<svg class="abs" style="left:1473px;top:932.9499999999999px;" width="15" height="15" viewBox="0 0 15 15"><path d="M1.6 13.4 L2.3 10.2 L10.8 1.7 Q11.8 0.7 12.8 1.7 L13.3 2.2 Q14.3 3.2 13.3 4.2 L4.8 12.7 Z" fill="none" stroke="#3f4aae" stroke-width="1.4" stroke-linejoin="round"/></svg>
<svg class="abs" style="left:1504.5px;top:932.65px;" width="16" height="16" viewBox="0 0 16 16"><g fill="none" stroke="#3f4aae" stroke-width="1.6" stroke-linecap="round" stroke-linejoin="round"><path d="M7 3.45 H3.2 Q1.6 3.45 1.6 5.05 V13.05 Q1.6 14.65 3.2 14.65 H10.9 Q12.5 14.65 12.5 13.05 V9.3 M4.8 11.1 L14.2 1.7 M10.6 1.5 H14.4 V5.2"/></g></svg>
<svg class="abs" style="left:1540.2px;top:934.8499999999999px;" width="12" height="12" viewBox="0 0 12 12"><path d="M1.6 1.6 L9.9 9.9 M9.9 1.6 L1.6 9.9" stroke="#8b4c4a" stroke-width="1.4" stroke-linecap="round"/></svg>
<div class="abs" style="left:226px;top:1013.7999999999998px;width:1344px;height:1px;background:#e3e3e6"></div>
<div class="t" style="left:235.90px;top:985px;font-size:12.0px;color:#3b48a8;font-weight:400;-webkit-text-stroke:0.46px #3b48a8;letter-spacing:-0.55px">GPR52</div>
<div class="t" style="left:377.80px;top:985px;font-size:12.2px;color:#6f717c;font-weight:400;">Q9Y2T5</div>
<div class="t" style="left:472.40px;top:985px;font-size:12.3px;color:#6f717c;font-weight:400;">In progress</div>
<div class="t" style="left:567.00px;top:985px;font-size:12.3px;color:#6f717c;font-weight:400;">0</div>
<div class="t" style="left:661.60px;top:985px;font-size:12.3px;color:#6f717c;font-weight:400;">0</div>
<div class="t" style="left:756.20px;top:985px;font-size:12.3px;color:#6f717c;font-weight:400;"></div>
<div class="t" style="left:946.00px;top:985px;font-size:12.54px;color:#6f717c;font-weight:400;">G protein-coupled receptor 52</div>
<div class="t" style="left:1352.50px;top:985px;font-size:12.1px;color:#6f717c;font-weight:400;">Jun 28, 2024</div>
<svg class="abs" style="left:1473px;top:982.2499999999999px;" width="15" height="15" viewBox="0 0 15 15"><path d="M1.6 13.4 L2.3 10.2 L10.8 1.7 Q11.8 0.7 12.8 1.7 L13.3 2.2 Q14.3 3.2 13.3 4.2 L4.8 12.7 Z" fill="none" stroke="#3f4aae" stroke-width="1.4" stroke-linejoin="round"/></svg>
<svg class="abs" style="left:1504.5px;top:981.9499999999999px;" width="16" height="16" viewBox="0 0 16 16"><g fill="none" stroke="#3f4aae" stroke-width="1.6" stroke-linecap="round" stroke-linejoin="round"><path d="M7 3.45 H3.2 Q1.6 3.45 1.6 5.05 V13.05 Q1.6 14.65 3.2 14.65 H10.9 Q12.5 14.65 12.5 13.05 V9.3 M4.8 11.1 L14.2 1.7 M10.6 1.5 H14.4 V5.2"/></g></svg>
<svg class="abs" style="left:1540.2px;top:984.1499999999999px;" width="12" height="12" viewBox="0 0 12 12"><path d="M1.6 1.6 L9.9 9.9 M9.9 1.6 L1.6 9.9" stroke="#8b4c4a" stroke-width="1.4" stroke-linecap="round"/></svg>
<div class="abs" style="left:226px;top:1063.1000000000001px;width:1344px;height:1px;background:#e3e3e6"></div>
<div class="abs" style="left:1574px;top:623px;width:7px;height:143px;background:#c1c1c1;border-radius:4px"></div>
<div class="abs" style="left:1559.5px;top:960.9px;width:42.6px;height:42.6px;background:#4b46dc;border-radius:50%;box-shadow:0 0 0 1.5px #fff"></div>
<svg class="abs" style="left:1568px;top:970px;" width="26" height="26" viewBox="0 0 26 26"><path d="M12.5 1.5 Q23 1.5 23 11.3 Q23 16.5 18.2 19.3 L18 25 L14.3 21.2 Q13.4 21.3 12.5 21.3 Q2 21.3 2 11.3 Q2 1.5 12.5 1.5Z" fill="#f6f9fe"/><g stroke="#4b46dc" stroke-width="2.1" stroke-linecap="round"><path d="M6.5 5.5 H11.5 M4.3 9.6 H11.5 M4.3 13.8 H11.5"/></g></svg>
</div>
</body></html>
